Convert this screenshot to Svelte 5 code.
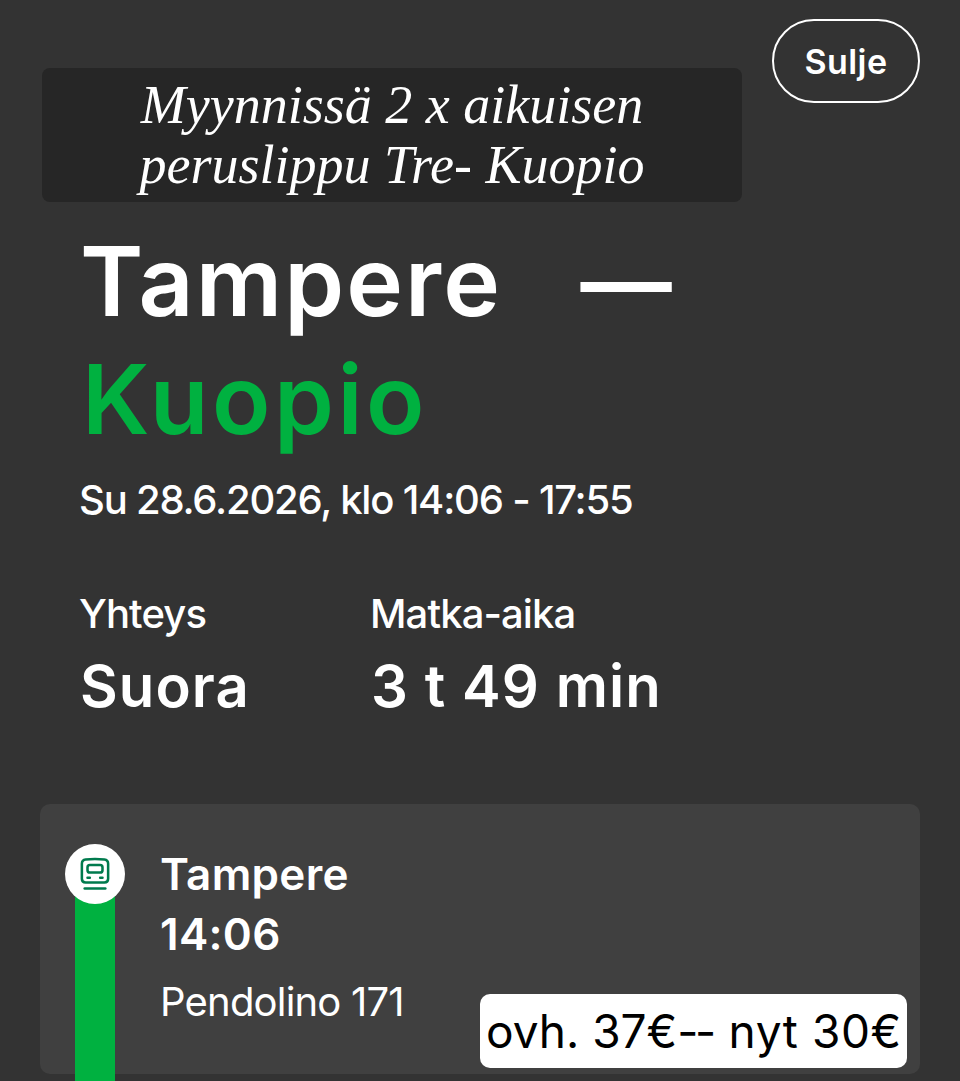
<script>
  const facts = [
    { label: 'Yhteys', value: 'Suora' },
    { label: 'Matka-aika', value: '3 t 49 min' }
  ];
</script>

<main class="page">
  <header class="top">
    <div class="notice">
      <p>Myynnissä 2 x aikuisen</p>
      <p>peruslippu Tre- Kuopio</p>
    </div>
    <button class="close">Sulje</button>
  </header>

  <section class="summary">
    <h1>Tampere <span class="dash">—</span><br /><span class="dest">Kuopio</span></h1>
    <p class="when">Su 28.6.2026, klo 14:06 - 17:55</p>
    <div class="facts">
      {#each facts as f}
        <div class="fact">
          <div class="label">{f.label}</div>
          <div class="value">{f.value}</div>
        </div>
      {/each}
    </div>
  </section>

  <section class="card">
    <div class="rail">
      <div class="bar"></div>
      <div class="dot">
        <svg viewBox="0 0 32 36" width="30" height="34" fill="none" stroke="#007a4d" stroke-width="2.7" stroke-linecap="round" stroke-linejoin="round">
          <path d="M2 7q0-4 4-4.5q10-1.2 20 0q4 .5 4 4.5v16q0 4-4 4H6q-4 0-4-4z" />
          <rect x="8" y="8.5" width="16" height="8" rx="2.5" />
          <path d="M8 22h2.5M21.5 22h2.5" />
          <path d="M5 33.5h22" />
        </svg>
      </div>
    </div>
    <div class="stop">
      <div class="name">Tampere</div>
      <div class="time">14:06</div>
      <div class="train">Pendolino 171</div>
    </div>
    <div class="price">ovh. 37€<span class="dashes">--</span> <span class="now">nyt 30€</span></div>
  </section>
</main>

<style>
  :global(body) {
    margin: 0;
    background: #333333;
    overflow: hidden;
  }
  .page {
    height: 1081px;
    overflow: hidden;
    box-sizing: border-box;
    padding: 19px 40px 0 40px;
    color: #fff;
    font-family: Inter, "Liberation Sans", sans-serif;
  }
  .top {
    display: flex;
    justify-content: space-between;
    align-items: flex-start;
    height: 183px;
  }
  .notice {
    margin: 49px 0 0 2px;
    width: 700px;
    height: 134px;
    box-sizing: border-box;
    padding-top: 7px;
    background: #262626;
    border-radius: 8px;
    text-align: center;
    font-family: "Liberation Serif", serif;
    font-style: italic;
    font-size: 54px;
    line-height: 60px;
  }
  .notice p {
    margin: 0;
  }
  .close {
    width: 148px;
    height: 84px;
    background: transparent;
    border: 2px solid #fff;
    border-radius: 42px;
    color: #fff;
    font-family: Inter, sans-serif;
    font-weight: 600;
    font-size: 34px;
    letter-spacing: 0.4px;
    padding: 0;
  }
  .summary {
    padding-left: 40px;
  }
  h1 {
    margin: 20px 0 0;
    font-weight: 600;
    font-size: 96px;
    line-height: 118px;
    letter-spacing: 2.1px;
  }
  .dash {
    margin-left: 50px;
    display: inline-block;
    transform: scaleX(0.95);
  }
  .dest {
    color: #00b140;
    margin-left: 2px;
    letter-spacing: 3.5px;
  }
  .when {
    margin: 16px 0 0 -1px;
    font-size: 40px;
    line-height: 52px;
    font-weight: 500;
    letter-spacing: -1.2px;
  }
  .facts {
    display: flex;
    margin-top: 63px;
    margin-left: -1px;
  }
  .fact {
    width: 291px;
  }
  .label {
    font-size: 40px;
    line-height: 50px;
    font-weight: 500;
    letter-spacing: -0.9px;
    white-space: nowrap;
  }
  .value {
    margin-top: 12px;
    margin-left: 1px;
    font-size: 58px;
    line-height: 70px;
    font-weight: 600;
    letter-spacing: 1.1px;
    white-space: nowrap;
  }
  .card {
    position: relative;
    margin-top: 83px;
    height: 270px;
    background: #404040;
    border-radius: 10px;
    display: flex;
    box-sizing: border-box;
    padding: 40px 0 0 120px;
  }
  .rail {
    position: absolute;
    left: 25px;
    top: 40px;
    width: 60px;
  }
  .bar {
    position: absolute;
    left: 10px;
    top: 40px;
    width: 40px;
    height: 300px;
    background: #00b140;
  }
  .dot {
    position: relative;
    width: 60px;
    height: 60px;
    border-radius: 50%;
    background: #fff;
    display: flex;
    align-items: center;
    justify-content: center;
  }
  .name, .time {
    font-size: 44px;
    line-height: 60px;
    font-weight: 600;
    letter-spacing: 0.3px;
  }
  .train {
    margin-top: 13px;
    font-size: 40px;
    line-height: 50px;
    letter-spacing: -0.8px;
  }
  .price {
    position: absolute;
    left: 440px;
    top: 190px;
    width: 427px;
    height: 74px;
    box-sizing: border-box;
    padding-left: 6px;
    background: #fff;
    border-radius: 10px;
    color: #000;
    font-size: 46px;
    line-height: 74px;
    white-space: nowrap;
  }
  .dashes {
    letter-spacing: -3.5px;
    margin-right: 3px;
  }
  .now {
    letter-spacing: 0.6px;
  }
</style>
